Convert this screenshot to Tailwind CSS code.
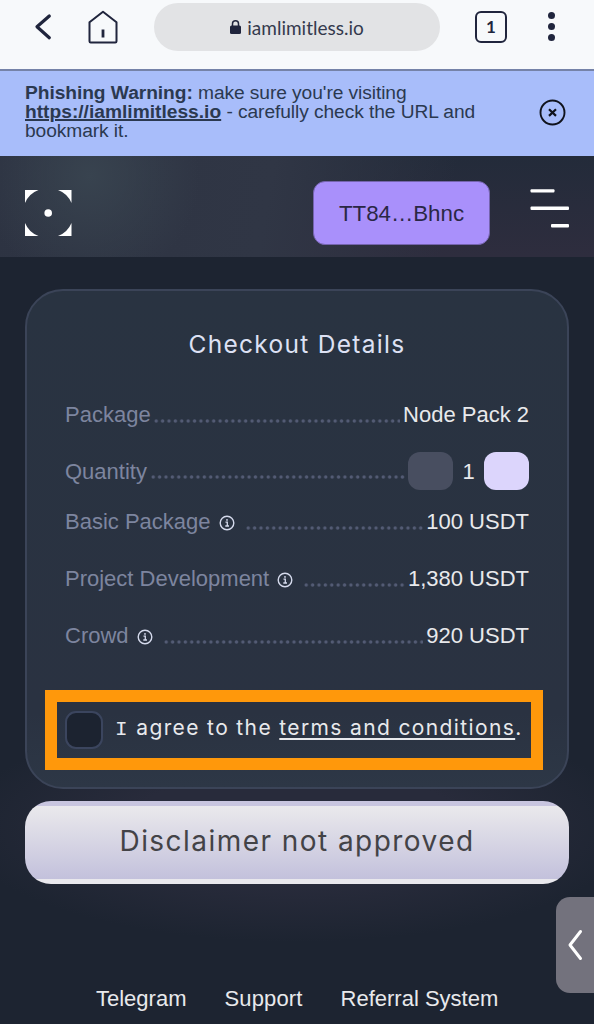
<!DOCTYPE html>
<html lang="en">
<head>
    <meta charset="UTF-8">
    <meta name="viewport" content="width=device-width, initial-scale=1.0">
    <title>Checkout</title>
    <script src="https://cdn.jsdelivr.net/npm/@tailwindcss/browser@4"></script>
</head>
<body class="relative h-[1024px] overflow-hidden bg-[#1d2431] font-['Liberation_Sans',sans-serif] text-[22px] leading-[26px] text-[#e8e9ec]">

    <!-- Browser bar -->
    <div class="flex h-[69px] items-start bg-[#f7f9fb] font-['Lato',sans-serif] text-[#20253d]">
        <svg class="ml-[34px] mt-[13px] h-[28px] w-[18px]" viewBox="0 0 18 28" fill="none" stroke="currentColor" stroke-width="3.2" stroke-linecap="round" stroke-linejoin="round"><path d="M15.300 3 3 13.800l12.300 10.900"/></svg>
        <svg class="ml-[35px] mt-[10px] h-[34px] w-[32px]" viewBox="0 0 32 34" fill="none" stroke="currentColor" stroke-width="2" stroke-linecap="round" stroke-linejoin="round"><path d="M2.500 12.300 16 1.800l13.500 10.500v19a1.200 1.200 0 0 1-1.200 1.200H3.700a1.200 1.200 0 0 1-1.200-1.200z"/><path d="M16 19.500v8" stroke-width="2.800" stroke-linecap="butt"/></svg>
        <div class="ml-[35px] mt-[3px] flex h-[48px] w-[286px] items-center justify-center gap-[6px] rounded-full bg-[#e2e3e5] text-[19px]">
            <svg class="h-[14px] w-[11px]" viewBox="0 0 11 14"><rect y="5.500" width="11" height="8.500" rx="1.500" fill="currentColor"/><path d="M2.500 6V3.800a3 3 0 0 1 6 0V6" fill="none" stroke="currentColor" stroke-width="1.500"/></svg>
            <span class="mt-[2px] text-[#343a4d]">iamlimitless.io</span>
        </div>
        <div class="ml-[35px] mt-[11px] flex h-[32px] w-[32px] items-center justify-center rounded-[6px] border-2 border-current text-[17px] font-bold">1</div>
        <div class="ml-[41px] mt-[12px] flex flex-col gap-[4.500px]">
            <span class="h-[6.500px] w-[6.500px] rounded-full bg-current"></span>
            <span class="h-[6.500px] w-[6.500px] rounded-full bg-current"></span>
            <span class="h-[6.500px] w-[6.500px] rounded-full bg-current"></span>
        </div>
    </div>

    <!-- Phishing warning -->
    <div class="flex h-[87px] items-start justify-between border-t-2 border-[#7582a8] bg-[#a8bdfa] pl-[25px] pr-[28px] pt-[12px] text-[19.200px] leading-[19.200px] tracking-[-0.080px] text-[#2b3950]">
        <p class="whitespace-nowrap"><b class="tracking-[-0.060px]">Phishing Warning:</b> make sure you're visiting<br><b class="tracking-normal underline decoration-2">https://iamlimitless.io</b> - carefully check the URL and<br>bookmark it.</p>
        <svg class="mt-[16px] h-[27px] w-[27px] shrink-0 text-[#10131c]" viewBox="0 0 27 27" fill="none" stroke="currentColor"><circle cx="13.500" cy="13.500" r="12" stroke-width="1.900"/><path d="m10 10.300 7 6.600m0-6.600-7 6.600" stroke-width="2.200"/></svg>
    </div>

    <!-- Site header -->
    <header class="flex h-[101px] items-center bg-[radial-gradient(circle_at_90px_20px,#38434f_0,transparent_110px),linear-gradient(100deg,#2d3342_0%,#303645_45%,transparent_75%),linear-gradient(#232b3a,#2e2d3e)] pl-[25px]">
        <svg class="mt-[12px] h-[46px] w-[47px]" viewBox="0 0 47 46" fill="#fff"><path d="M0 0h13.500Q4 3.500 0 13zM46.500 0H33Q42.500 3.500 46.500 13zM0 46h13.500Q4 42.500 0 33zM46.500 46H33Q42.500 42.500 46.500 33z"/><circle cx="23.200" cy="23" r="3.800"/></svg>
        <button class="ml-[241px] mt-[13px] h-[64px] w-[177px] rounded-[12px] border border-[#7564ae] bg-[#a990fb] pt-px text-[22.300px] text-[#2a2745]">TT84…Bhnc</button>
        <svg class="ml-[40px] mt-[4px] h-[39px] w-[39px]" viewBox="0 0 39 39" fill="#fff"><rect x=".5" y=".2" width="24" height="3.400" rx="1"/><rect x=".5" y="17.500" width="38.500" height="3.400" rx="1"/><rect x="21" y="35" width="18" height="3.400" rx="1"/></svg>
    </header>

    <!-- Checkout card -->
    <main class="bg-[radial-gradient(ellipse_340px_115px_at_50%_570px,#282b3b_50%,transparent)] px-[25px] pb-[101px] pt-[32px]">
        <section class="h-[500px] rounded-[38px] border-2 border-[#3b4458] bg-[linear-gradient(#293341,#2a3241_85%,#2d3746)] px-[38px] pt-[39px]">
            <h1 class="h-[26px] pt-px text-center font-['Inter',sans-serif] text-[24.500px] tracking-[1.300px] text-[#dde1f4]">Checkout Details</h1>

            <div class="mt-[46px] flex h-[26px] items-center">
                <span class="text-[#7d859f]">Package</span>
                <span class="ml-[2px] mr-[3px] mt-[11px] h-[4px] flex-1 bg-[radial-gradient(circle,#535b74_1.200px,transparent_2.100px)] bg-[size:6.400px_4px]"></span>
                <span>Node Pack 2</span>
            </div>
            <div class="mt-[24px] flex h-[38px] items-center">
                <span class="pt-[2px] text-[#7d859f]">Quantity</span>
                <span class="ml-[3px] mr-[3px] mt-[12px] h-[4px] flex-1 bg-[radial-gradient(circle,#535b74_1.200px,transparent_2.100px)] bg-[size:6.400px_4px]"></span>
                <button class="h-[38px] w-[45px] rounded-[12px] bg-[#484e60]"></button>
                <span class="w-[31px] pt-[2px] text-center">1</span>
                <button class="h-[38px] w-[45px] rounded-[12px] bg-[#dcd5fc]"></button>
            </div>
            <div class="mt-[19px] flex h-[26px] items-center">
                <span class="text-[#7d859f]">Basic Package</span>
                <svg class="ml-[8px] mt-[2px] h-[16px] w-[16px] text-[#d5daec]" viewBox="0 0 16 16" fill="none" stroke="currentColor"><circle cx="8" cy="8" r="6.800" stroke-width="1.400"/><path d="M6.500 7.200h1.800v3.800M6.300 11h3.700" stroke-width="1.300"/><circle cx="8" cy="4.900" r=".9" fill="currentColor" stroke="none"/></svg>
                <span class="ml-[10px] mr-[3px] mt-[11px] h-[4px] flex-1 bg-[radial-gradient(circle,#535b74_1.200px,transparent_2.100px)] bg-[size:6.400px_4px]"></span>
                <span>100 USDT</span>
            </div>
            <div class="mt-[31px] flex h-[26px] items-center">
                <span class="text-[#7d859f]">Project Development</span>
                <svg class="ml-[8px] mt-[2px] h-[16px] w-[16px] text-[#d5daec]" viewBox="0 0 16 16" fill="none" stroke="currentColor"><circle cx="8" cy="8" r="6.800" stroke-width="1.400"/><path d="M6.500 7.200h1.800v3.800M6.300 11h3.700" stroke-width="1.300"/><circle cx="8" cy="4.900" r=".9" fill="currentColor" stroke="none"/></svg>
                <span class="ml-[10px] mr-[3px] mt-[11px] h-[4px] flex-1 bg-[radial-gradient(circle,#535b74_1.200px,transparent_2.100px)] bg-[size:6.400px_4px]"></span>
                <span>1,380 USDT</span>
            </div>
            <div class="mt-[31px] flex h-[26px] items-center">
                <span class="text-[#7d859f]">Crowd</span>
                <svg class="ml-[8px] mt-[2px] h-[16px] w-[16px] text-[#d5daec]" viewBox="0 0 16 16" fill="none" stroke="currentColor"><circle cx="8" cy="8" r="6.800" stroke-width="1.400"/><path d="M6.500 7.200h1.800v3.800M6.300 11h3.700" stroke-width="1.300"/><circle cx="8" cy="4.900" r=".9" fill="currentColor" stroke="none"/></svg>
                <span class="ml-[10px] mr-[3px] mt-[11px] h-[4px] flex-1 bg-[radial-gradient(circle,#535b74_1.200px,transparent_2.100px)] bg-[size:6.400px_4px]"></span>
                <span>920 USDT</span>
            </div>

            <!-- Terms -->
            <div class="-ml-[20px] -mr-[14px] mt-[41px] flex h-[80px] items-center border-12 border-[#ff980b] pl-[8px]">
                <span class="h-[38px] w-[38px] shrink-0 rounded-[11px] border-2 border-[#3b455e] bg-[#1c2330]"></span>
                <p class="-mt-[2px] ml-[12px] whitespace-nowrap font-['Inter',sans-serif] text-[21px] tracking-[1.370px]"><span class="font-['Liberation_Mono',monospace]">I</span> agree to the <a href="#" class="underline decoration-[1.500px] underline-offset-3">terms and conditions</a>.</p>
            </div>
        </section>

        <button class="mt-[12px] block h-[83px] w-full rounded-[26px] bg-[linear-gradient(#c8c5df_5px,#eae9ec_5px,#c3c1dc_78px,#e9e8ed_78px)] pb-[3px] font-['Inter',sans-serif] text-[28px] tracking-[1.450px] text-[#434347]">Disclaimer not approved</button>
    </main>

    <nav class="flex gap-[38px] pl-[96px] pt-px">
        <a href="#">Telegram</a>
        <a href="#" class="tracking-[0.140px]">Support</a>
        <a href="#">Referral System</a>
    </nav>

    <!-- Side drawer handle -->
    <div class="absolute right-0 top-[897px] flex h-[96px] w-[38px] items-center rounded-l-[14px] bg-[#73727d] pl-[11px]">
        <svg class="h-[32px] w-[17px]" viewBox="0 0 17 32" fill="none" stroke="#fff" stroke-width="3" stroke-linecap="round" stroke-linejoin="round"><path d="M13.500 2.500 3 16l10.500 13.500"/></svg>
    </div>
</body>
</html>
